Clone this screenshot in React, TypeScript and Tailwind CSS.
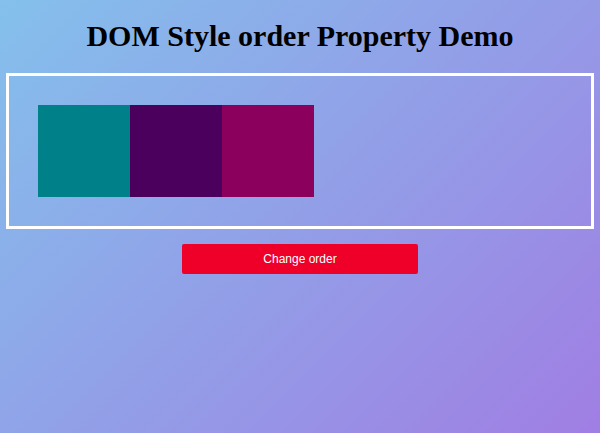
import { useState } from "react";

export default function App() {
  const [moved, setMoved] = useState(false);

  return (
    <main className="min-h-screen bg-[linear-gradient(135deg,#84c0ec_0%,#a07ee3_100%)] px-1.5 pt-4 text-center font-['Liberation_Serif',serif] text-black">
      <h1 className="text-[30px] leading-10 font-bold">DOM Style order Property Demo</h1>
      <div className="mt-[17px] flex border-3 border-white p-[29px]">
        <div className={`size-[92px] bg-[#008089] ${moved ? "order-3" : "order-none"}`} />
        <div className="size-[92px] bg-[#4a005c]" />
        <div className="size-[92px] bg-[#8a005c]" />
      </div>
      <button
        type="button"
        onClick={() => setMoved(!moved)}
        className="mx-auto mt-[15px] block h-[30px] w-2/5 cursor-pointer rounded-xs bg-[#ee0028] font-['Liberation_Sans',sans-serif] text-[12px] leading-4 text-white"
      >
        Change order
      </button>
    </main>
  );
}
